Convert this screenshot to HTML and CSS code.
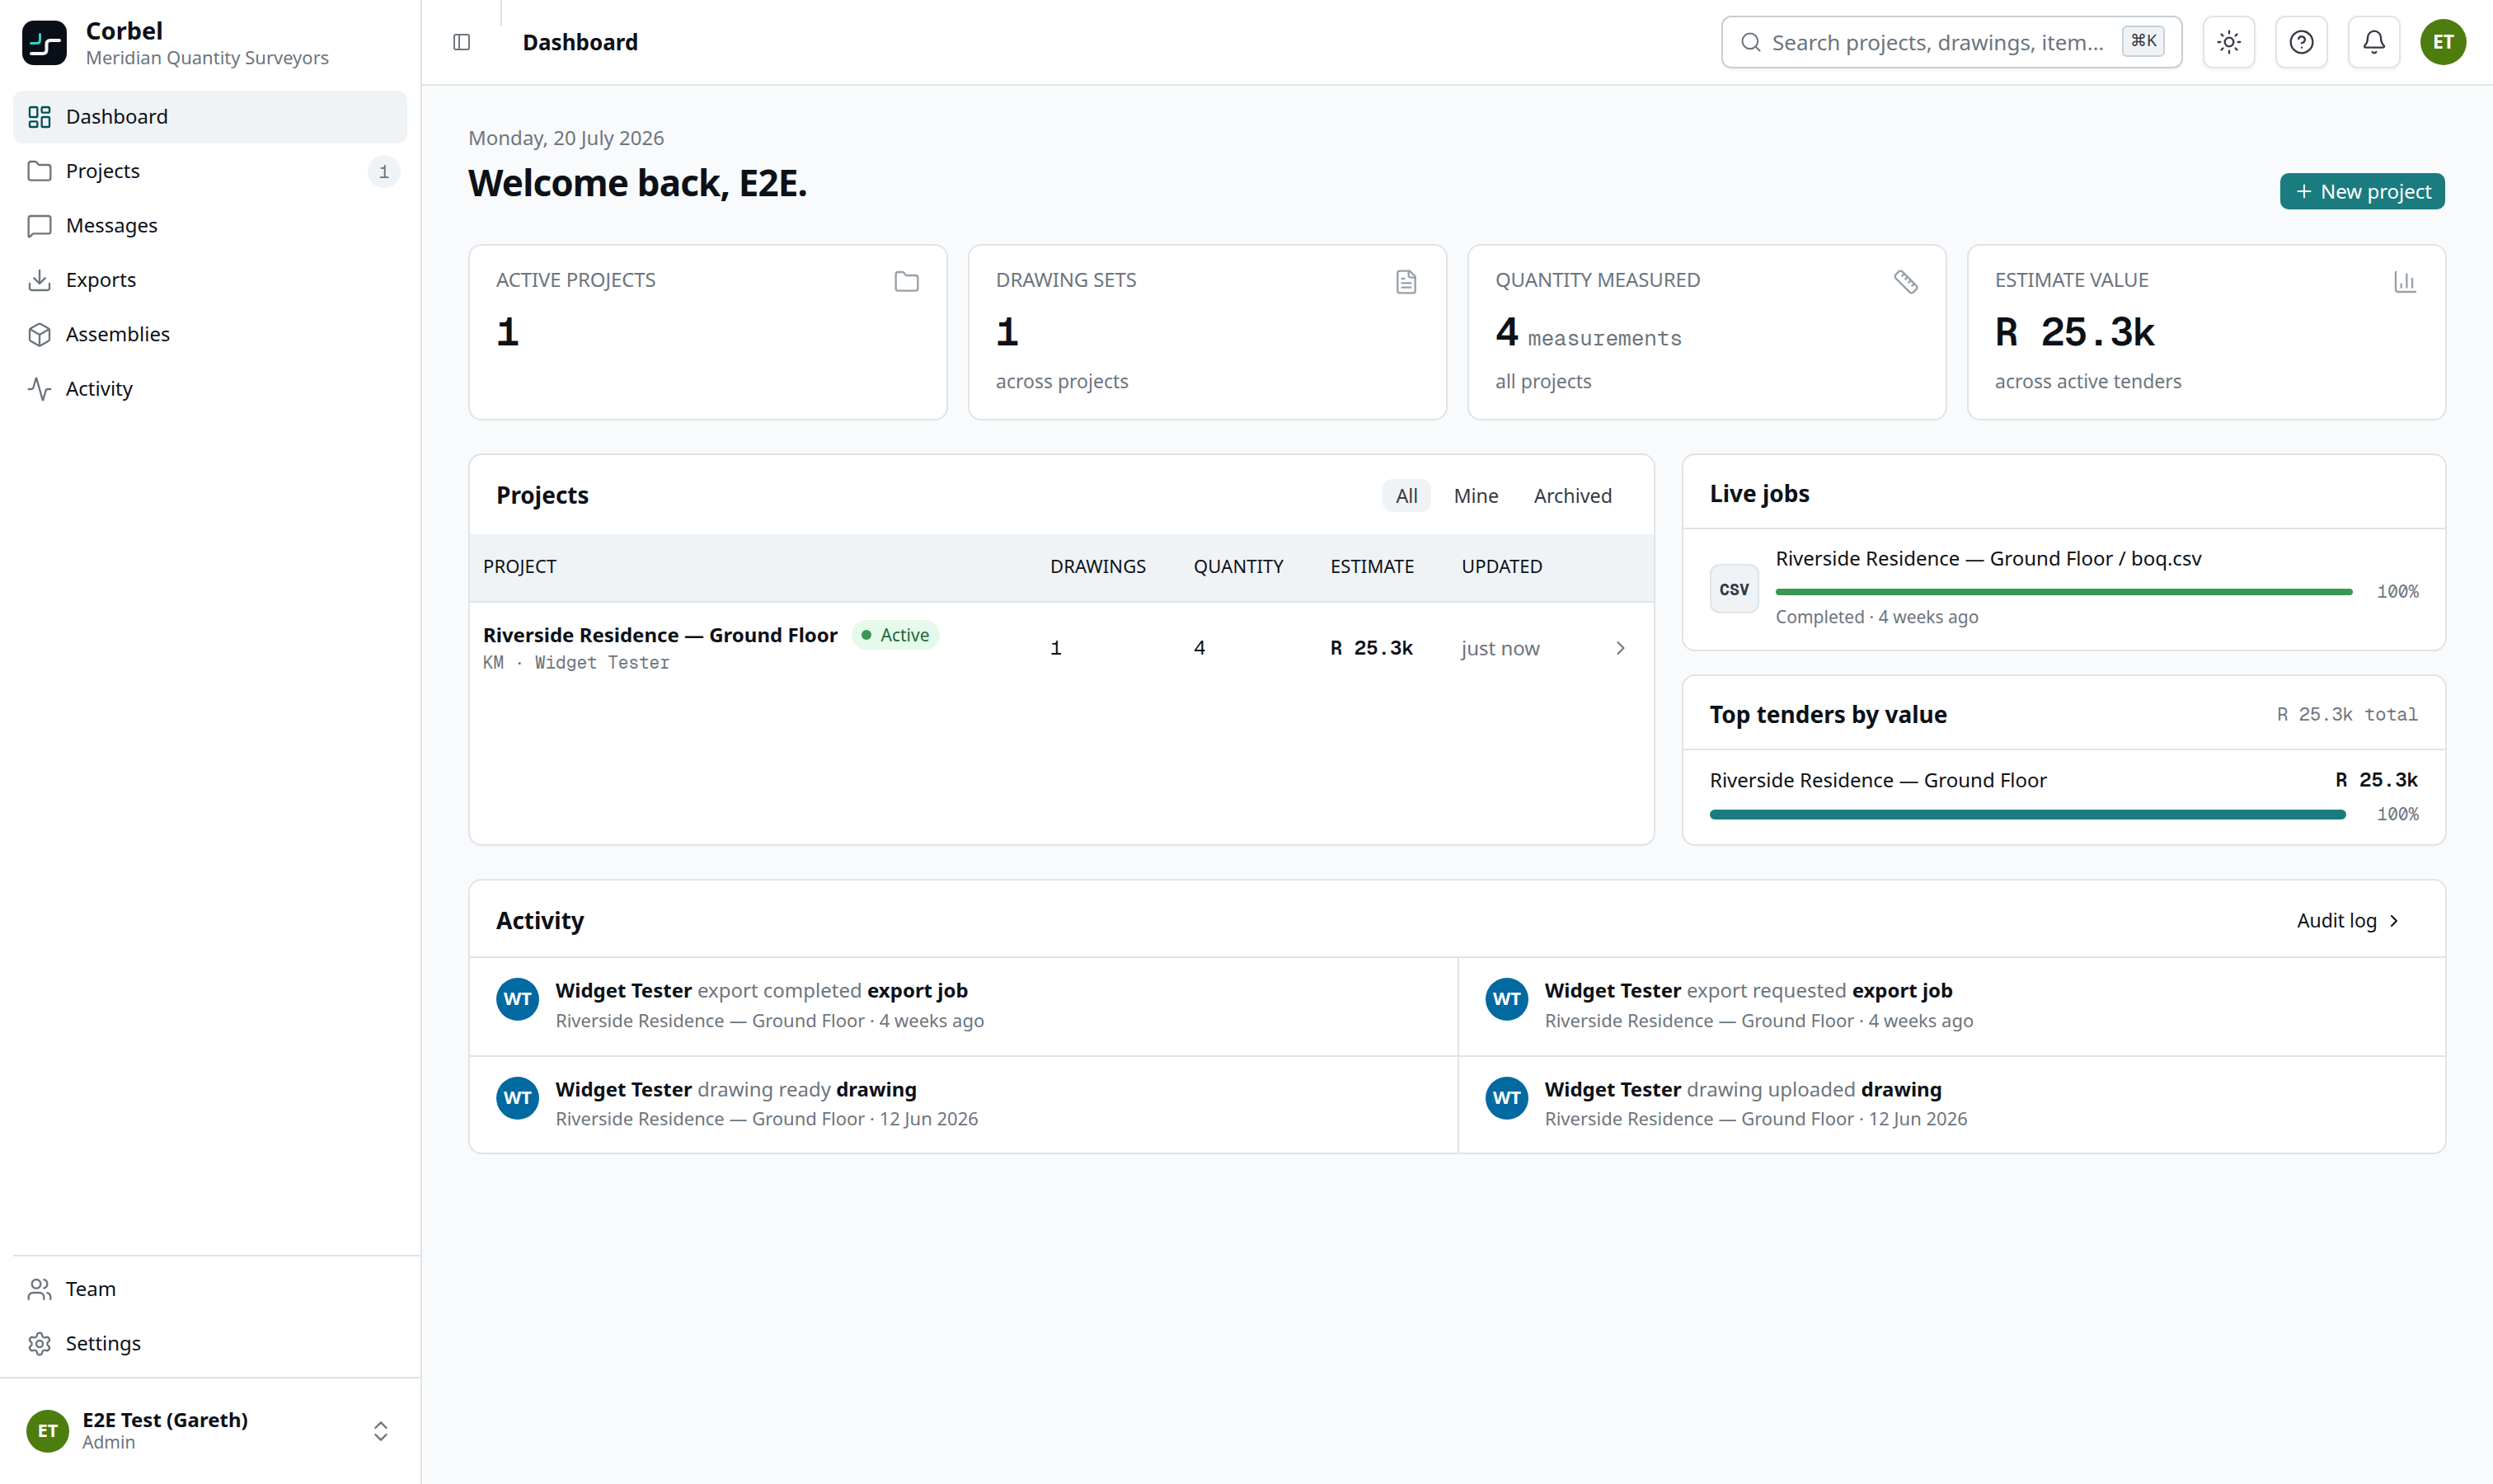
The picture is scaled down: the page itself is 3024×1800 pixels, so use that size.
FILE: index.html
```
<!DOCTYPE html>
<html lang="en">
<head>
    <meta charset="UTF-8">
    <meta name="viewport" content="width=device-width, initial-scale=1.0">
    <title>Dashboard - Corbel</title>
    <link rel="stylesheet" href="styles.css">
</head>
<body>
    <aside class="sidebar">
        <div class="brand">
            <svg class="brand-logo" viewBox="0 0 54 54">
                <rect width="54" height="54" rx="14" fill="#0a0f17"/>
                <path d="M10.500 27.500H17.500Q21.500 27.500 21.500 23.500V16.500" fill="none" stroke="#2dd4bf" stroke-width="3" stroke-linecap="round"/>
                <path d="M11 40H25Q29.500 40 29.500 35.500V28.500Q29.500 24 34 24H45" fill="none" stroke="#f4f6fb" stroke-width="4" stroke-linecap="round"/>
            </svg>
            <div>
                <div class="brand-name">Corbel</div>
                <div class="brand-org">Meridian Quantity Surveyors</div>
            </div>
        </div>

        <nav class="nav">
            <a class="nav-item active">
                <svg class="icon" viewBox="0 0 24 24"><rect width="7" height="9" x="3" y="3" rx="1"/><rect width="7" height="5" x="14" y="3" rx="1"/><rect width="7" height="9" x="14" y="12" rx="1"/><rect width="7" height="5" x="3" y="16" rx="1"/></svg>
                Dashboard
            </a>
            <a class="nav-item">
                <svg class="icon" viewBox="0 0 24 24"><path d="M20 20a2 2 0 0 0 2-2V8a2 2 0 0 0-2-2h-7.900a2 2 0 0 1-1.690-.9L9.600 3.900A2 2 0 0 0 7.930 3H4a2 2 0 0 0-2 2v13a2 2 0 0 0 2 2Z"/></svg>
                Projects
                <span class="nav-count">1</span>
            </a>
            <a class="nav-item">
                <svg class="icon" viewBox="0 0 24 24"><path d="M22 17a2 2 0 0 1-2 2H6.828a2 2 0 0 0-1.414.586l-2.202 2.202A.71.71 0 0 1 2 21.286V5a2 2 0 0 1 2-2h16a2 2 0 0 1 2 2z"/></svg>
                Messages
            </a>
            <a class="nav-item">
                <svg class="icon" viewBox="0 0 24 24"><path d="M12 15V3"/><path d="M21 15v4a2 2 0 0 1-2 2H5a2 2 0 0 1-2-2v-4"/><path d="m7 10 5 5 5-5"/></svg>
                Exports
            </a>
            <a class="nav-item">
                <svg class="icon" viewBox="0 0 24 24"><path d="M21 8a2 2 0 0 0-1-1.730l-7-4a2 2 0 0 0-2 0l-7 4A2 2 0 0 0 3 8v8a2 2 0 0 0 1 1.730l7 4a2 2 0 0 0 2 0l7-4A2 2 0 0 0 21 16Z"/><path d="m3.300 7 8.700 5 8.700-5"/><path d="M12 22V12"/></svg>
                Assemblies
            </a>
            <a class="nav-item">
                <svg class="icon" viewBox="0 0 24 24"><path d="M22 12h-2.480a2 2 0 0 0-1.930 1.460l-2.350 8.360a.25.25 0 0 1-.48 0L9.240 2.180a.25.25 0 0 0-.48 0l-2.350 8.360A2 2 0 0 1 4.490 12H2"/></svg>
                Activity
            </a>
        </nav>

        <nav class="nav nav-bottom">
            <a class="nav-item">
                <svg class="icon" viewBox="0 0 24 24"><path d="M16 21v-2a4 4 0 0 0-4-4H6a4 4 0 0 0-4 4v2"/><path d="M16 3.128a4 4 0 0 1 0 7.744"/><path d="M22 21v-2a4 4 0 0 0-3-3.870"/><circle cx="9" cy="7" r="4"/></svg>
                Team
            </a>
            <a class="nav-item">
                <svg class="icon" viewBox="0 0 24 24"><path d="M9.671 4.136a2.340 2.340 0 0 1 4.659 0 2.340 2.340 0 0 0 3.319 1.915 2.340 2.340 0 0 1 2.330 4.033 2.340 2.340 0 0 0 0 3.831 2.340 2.340 0 0 1-2.330 4.033 2.340 2.340 0 0 0-3.319 1.915 2.340 2.340 0 0 1-4.659 0 2.340 2.340 0 0 0-3.320-1.915 2.340 2.340 0 0 1-2.330-4.033 2.340 2.340 0 0 0 0-3.831A2.340 2.340 0 0 1 6.350 6.051a2.340 2.340 0 0 0 3.319-1.915"/><circle cx="12" cy="12" r="3"/></svg>
                Settings
            </a>
        </nav>

        <div class="user">
            <span class="avatar green">ET</span>
            <div class="user-text">
                <div class="user-name">E2E Test (Gareth)</div>
                <div class="user-role">Admin</div>
            </div>
            <svg class="icon" viewBox="0 0 24 24"><path d="m7 15 5 5 5-5"/><path d="m7 9 5-5 5 5"/></svg>
        </div>
    </aside>

    <div class="page">
        <header class="topbar">
            <svg class="icon icon-panel" viewBox="0 0 24 24"><rect width="18" height="18" x="3" y="3" rx="2"/><path d="M9 3v18"/></svg>
            <span class="topbar-sep"></span>
            <h1>Dashboard</h1>
            <div class="search">
                <svg class="icon" viewBox="0 0 24 24"><path d="m21 21-4.340-4.340"/><circle cx="11" cy="11" r="8"/></svg>
                <span class="search-text">Search projects, drawings, item…</span>
                <kbd>⌘K</kbd>
            </div>
            <button class="icon-btn"><svg class="icon" viewBox="0 0 24 24"><circle cx="12" cy="12" r="4"/><path d="M12 2v2"/><path d="M12 20v2"/><path d="m4.930 4.930 1.410 1.410"/><path d="m17.660 17.660 1.410 1.410"/><path d="M2 12h2"/><path d="M20 12h2"/><path d="m6.340 17.660-1.410 1.410"/><path d="m19.070 4.930-1.410 1.410"/></svg></button>
            <button class="icon-btn"><svg class="icon" viewBox="0 0 24 24"><circle cx="12" cy="12" r="10"/><path d="M9.090 9a3 3 0 0 1 5.830 1c0 2-3 3-3 3"/><path d="M12 17h.01"/></svg></button>
            <button class="icon-btn"><svg class="icon" viewBox="0 0 24 24"><path d="M10.268 21a2 2 0 0 0 3.464 0"/><path d="M3.262 15.326A1 1 0 0 0 4 17h16a1 1 0 0 0 .74-1.673C19.410 13.956 18 12.499 18 8A6 6 0 0 0 6 8c0 4.499-1.411 5.956-2.738 7.326"/></svg></button>
            <span class="avatar avatar-lg green">ET</span>
        </header>

        <main>
            <div class="welcome">
                <div>
                    <div class="date">Monday, 20 July 2026</div>
                    <h2>Welcome back, E2E.</h2>
                </div>
                <button class="new-btn">
                    <svg class="icon" viewBox="0 0 24 24"><path d="M5 12h14"/><path d="M12 5v14"/></svg>
                    New project
                </button>
            </div>

            <section class="stats">
                <div class="card stat">
                    <div class="stat-top">
                        <span>ACTIVE PROJECTS</span>
                        <svg class="icon" viewBox="0 0 24 24"><path d="M20 20a2 2 0 0 0 2-2V8a2 2 0 0 0-2-2h-7.900a2 2 0 0 1-1.690-.9L9.600 3.900A2 2 0 0 0 7.930 3H4a2 2 0 0 0-2 2v13a2 2 0 0 0 2 2Z"/></svg>
                    </div>
                    <div class="stat-value">1</div>
                </div>
                <div class="card stat">
                    <div class="stat-top">
                        <span>DRAWING SETS</span>
                        <svg class="icon" viewBox="0 0 24 24"><path d="M15 2H6a2 2 0 0 0-2 2v16a2 2 0 0 0 2 2h12a2 2 0 0 0 2-2V7Z"/><path d="M14 2v4a2 2 0 0 0 2 2h4"/><path d="M10 9H8"/><path d="M16 13H8"/><path d="M16 17H8"/></svg>
                    </div>
                    <div class="stat-value">1</div>
                    <div class="stat-note">across projects</div>
                </div>
                <div class="card stat">
                    <div class="stat-top">
                        <span>QUANTITY MEASURED</span>
                        <svg class="icon" viewBox="0 0 24 24"><path d="M21.300 15.300a2.400 2.400 0 0 1 0 3.400l-2.600 2.600a2.400 2.400 0 0 1-3.400 0L2.700 8.700a2.410 2.410 0 0 1 0-3.400l2.600-2.600a2.410 2.410 0 0 1 3.400 0Z"/><path d="m14.500 12.500 2-2"/><path d="m11.500 9.500 2-2"/><path d="m8.500 6.500 2-2"/><path d="m17.500 15.500 2-2"/></svg>
                    </div>
                    <div class="stat-value">4<span class="stat-unit">measurements</span></div>
                    <div class="stat-note">all projects</div>
                </div>
                <div class="card stat">
                    <div class="stat-top">
                        <span>ESTIMATE VALUE</span>
                        <svg class="icon" viewBox="0 0 24 24"><path d="M3 3v16a2 2 0 0 0 2 2h16"/><path d="M18 17V9"/><path d="M13 17V5"/><path d="M8 17v-3"/></svg>
                    </div>
                    <div class="stat-value">R 25.3k</div>
                    <div class="stat-note">across active tenders</div>
                </div>
            </section>

            <section class="columns">
                <div class="card projects">
                    <div class="projects-head">
                        <h3>Projects</h3>
                        <div class="tabs">
                            <button class="tab selected">All</button>
                            <button class="tab">Mine</button>
                            <button class="tab">Archived</button>
                        </div>
                    </div>
                    <table>
                        <thead>
                            <tr>
                                <th class="col-project">PROJECT</th>
                                <th class="col-drawings">DRAWINGS</th>
                                <th class="col-quantity">QUANTITY</th>
                                <th class="col-estimate">ESTIMATE</th>
                                <th class="col-updated">UPDATED</th>
                                <th></th>
                            </tr>
                        </thead>
                        <tbody>
                            <tr>
                                <td>
                                    <div class="project-name">Riverside Residence — Ground Floor <span class="status">Active</span></div>
                                    <div class="project-sub">KM · Widget Tester</div>
                                </td>
                                <td class="mono">1</td>
                                <td class="mono">4</td>
                                <td class="mono strong">R 25.3k</td>
                                <td class="muted">just now</td>
                                <td class="go"><svg class="icon icon-sm" viewBox="0 0 24 24"><path d="m9 18 6-6-6-6"/></svg></td>
                            </tr>
                        </tbody>
                    </table>
                </div>

                <div class="side">
                    <div class="card">
                        <div class="card-head"><h3>Live jobs</h3></div>
                        <div class="job">
                            <span class="file-type">CSV</span>
                            <div class="job-body">
                                <div class="job-name">Riverside Residence — Ground Floor / boq.csv</div>
                                <div class="progress">
                                    <div class="bar bar-green"></div>
                                    <span class="percent">100%</span>
                                </div>
                                <div class="job-note">Completed · 4 weeks ago</div>
                            </div>
                        </div>
                    </div>
                    <div class="card">
                        <div class="card-head">
                            <h3>Top tenders by value</h3>
                            <span class="total">R 25.3k total</span>
                        </div>
                        <div class="tender">
                            <div class="tender-row">
                                <span>Riverside Residence — Ground Floor</span>
                                <span class="mono strong">R 25.3k</span>
                            </div>
                            <div class="progress">
                                <div class="bar bar-teal"></div>
                                <span class="percent">100%</span>
                            </div>
                        </div>
                    </div>
                </div>
            </section>

            <section class="card activity">
                <div class="activity-head">
                    <h3>Activity</h3>
                    <a class="audit">Audit log <svg class="icon" viewBox="0 0 24 24"><path d="m9 18 6-6-6-6"/></svg></a>
                </div>
                <div class="feed">
                    <div class="event">
                        <span class="avatar blue">WT</span>
                        <div>
                            <div class="event-title"><b>Widget Tester</b> export completed <b>export job</b></div>
                            <div class="event-note">Riverside Residence — Ground Floor · 4 weeks ago</div>
                        </div>
                    </div>
                    <div class="event">
                        <span class="avatar blue">WT</span>
                        <div>
                            <div class="event-title"><b>Widget Tester</b> export requested <b>export job</b></div>
                            <div class="event-note">Riverside Residence — Ground Floor · 4 weeks ago</div>
                        </div>
                    </div>
                    <div class="event">
                        <span class="avatar blue">WT</span>
                        <div>
                            <div class="event-title"><b>Widget Tester</b> drawing ready <b>drawing</b></div>
                            <div class="event-note">Riverside Residence — Ground Floor · 12 Jun 2026</div>
                        </div>
                    </div>
                    <div class="event">
                        <span class="avatar blue">WT</span>
                        <div>
                            <div class="event-title"><b>Widget Tester</b> drawing uploaded <b>drawing</b></div>
                            <div class="event-note">Riverside Residence — Ground Floor · 12 Jun 2026</div>
                        </div>
                    </div>
                </div>
            </section>
        </main>
    </div>
</body>
</html>
```
FILE: styles.css
```
:root {
    --text: #0d1117;
    --muted: #6c757d;
    --border: #dfe4e8;
    --soft: #eff3f6;
    --teal: #1b7c80;
    --mono: "Geist Mono", "Liberation Mono", monospace;
}

* {
    box-sizing: border-box;
}

body {
    margin: 0;
    display: flex;
    height: 1800px;
    font-family: "Noto Sans", sans-serif;
    font-size: 24px;
    line-height: 36px;
    color: var(--text);
    background-color: #f8fafc;
}

h1, h2, h3 {
    margin: 0;
    font-weight: 700;
}

h3 {
    font-size: 28px;
    line-height: 40px;
}

button {
    font-family: inherit;
    padding: 0;
}

.icon {
    width: 32px;
    height: 32px;
    flex: none;
    display: block;
    fill: none;
    stroke: currentColor;
    stroke-width: 1.75;
    stroke-linecap: round;
    stroke-linejoin: round;
}

.mono {
    font-family: var(--mono);
}

.strong {
    font-weight: 600;
}

.muted {
    color: var(--muted);
}

/* Sidebar */
.sidebar {
    width: 512px;
    flex: none;
    display: flex;
    flex-direction: column;
    background-color: white;
    border-right: 2px solid var(--border);
}

.brand {
    height: 110px;
    padding: 19px 0 0 27px;
    display: flex;
    gap: 23px;
}

.brand-logo {
    width: 54px;
    height: 54px;
    margin-top: 6px;
}

.brand-name {
    font-size: 29px;
    font-weight: 700;
    line-height: 36px;
}

.brand-org {
    font-size: 22px;
    line-height: 29px;
    color: var(--muted);
}

.nav {
    padding: 0 16px;
    display: flex;
    flex-direction: column;
    gap: 2px;
}

.nav-item {
    height: 64px;
    padding: 0 8px 2px 16px;
    display: flex;
    align-items: center;
    gap: 16px;
    border-radius: 12px;
}

.nav-item .icon {
    margin-top: 2px;
    color: var(--muted);
}

.nav-item.active {
    background-color: var(--soft);
}

.nav-item.active .icon {
    color: #044e54;
}

.nav-count {
    width: 40px;
    height: 40px;
    margin: 2px 0 0 auto;
    border-radius: 20px;
    background-color: var(--soft);
    color: var(--muted);
    font-family: var(--mono);
    font-size: 22px;
    line-height: 40px;
    text-align: center;
}

.nav-bottom {
    margin: auto 0 0 16px;
    padding: 8px 16px 8px 0;
    border-top: 2px solid var(--border);
}

.user {
    height: 130px;
    padding: 0 32px;
    display: flex;
    align-items: center;
    gap: 16px;
    border-top: 2px solid var(--border);
    color: var(--muted);
}

.user-text {
    flex: 1;
    padding-bottom: 5px;
}

.user-name {
    font-weight: 700;
    line-height: 30px;
    color: var(--text);
}

.user-role {
    font-size: 21px;
    line-height: 24px;
}

.avatar {
    width: 52px;
    height: 52px;
    flex: none;
    border-radius: 50%;
    color: white;
    font-size: 22px;
    font-weight: 700;
    line-height: 48px;
    text-align: center;
}

.avatar-lg {
    width: 56px;
    height: 56px;
    font-size: 23px;
    line-height: 54px;
}

.green {
    background-color: #4d7c0f;
}

.blue {
    background-color: #0369a1;
}

/* Top bar */
.page {
    flex: 1;
}

.topbar {
    height: 104px;
    padding: 0 32px 0 36px;
    display: flex;
    align-items: center;
    background-color: white;
    border-bottom: 2px solid var(--border);
}

.icon-panel {
    width: 24px;
    height: 24px;
    color: var(--muted);
    stroke-width: 2;
}

.topbar-sep {
    width: 2px;
    height: 32px;
    margin: 0 25px 0 35px;
    align-self: flex-start;
    background-color: var(--border);
}

.topbar h1 {
    font-size: 26px;
}

.search {
    width: 560px;
    height: 64px;
    margin-left: auto;
    padding: 0 20px;
    display: flex;
    align-items: center;
    border: 2px solid #c8cfd6;
    border-radius: 12px;
    box-shadow: 0 2px 4px rgba(0, 0, 0, 0.05);
    color: var(--muted);
    font-size: 26px;
}

.search .icon {
    width: 28px;
    height: 28px;
    margin-right: 12px;
}

.search-text {
    flex: 1;
}

kbd {
    width: 52px;
    height: 38px;
    margin-bottom: 2px;
    border: 2px solid #c8cfd6;
    border-radius: 6px;
    background-color: var(--soft);
    color: #343a40;
    font-family: "Noto Sans", sans-serif;
    font-size: 20px;
    line-height: 32px;
    text-align: center;
}

.icon-btn {
    width: 64px;
    height: 64px;
    margin-left: 24px;
    display: flex;
    align-items: center;
    justify-content: center;
    border: 2px solid var(--border);
    border-radius: 12px;
    background-color: white;
    box-shadow: 0 2px 4px rgba(0, 0, 0, 0.05);
    color: #343a40;
}

.topbar .avatar {
    margin-left: 24px;
}

/* Content */
main {
    padding: 45px 56px;
}

.welcome {
    height: 147px;
    display: flex;
    justify-content: space-between;
}

.date {
    color: var(--muted);
}

.welcome h2 {
    margin-top: 8px;
    font-size: 44px;
    line-height: 56px;
    letter-spacing: -0.02em;
}

.new-btn {
    width: 200px;
    height: 44px;
    margin: 61px 2px 0 0;
    padding-bottom: 2px;
    display: flex;
    align-items: center;
    justify-content: center;
    gap: 7px;
    border: none;
    border-radius: 10px;
    background-color: var(--teal);
    color: white;
    font-size: 24px;
}

.new-btn .icon {
    width: 26px;
    height: 26px;
    margin-top: 2px;
}

.card {
    border: 2px solid var(--border);
    border-radius: 16px;
    background-color: white;
    overflow: hidden;
}

.stats {
    display: grid;
    grid-template-columns: repeat(4, 1fr);
    gap: 24px;
}

.stat {
    height: 214px;
    padding: 23px 32px;
}

.stat-top {
    display: flex;
    justify-content: space-between;
    letter-spacing: -0.12px;
    color: var(--muted);
}

.stat-top .icon {
    margin-top: 5px;
    color: #98a0a7;
}

.stat-value {
    margin-top: 14px;
    font-family: var(--mono);
    font-size: 48px;
    font-weight: 600;
    line-height: 60px;
    letter-spacing: -0.02em;
}

.stat-unit {
    margin-left: 12px;
    font-size: 26px;
    font-weight: 400;
    line-height: 1;
    letter-spacing: 0;
    color: var(--muted);
}

.stat-note {
    margin-top: 12px;
    font-size: 23px;
    color: var(--muted);
}

.columns {
    margin-top: 40px;
    display: grid;
    grid-template-columns: 1440px 1fr;
    gap: 32px;
}

.projects {
    height: 476px;
}

.projects-head {
    height: 96px;
    padding: 0 34px 0 32px;
    display: flex;
    align-items: center;
    justify-content: space-between;
}

.tabs {
    margin-top: 2px;
    display: flex;
    gap: 11px;
}

.tab {
    height: 40px;
    padding: 0 16px;
    border: none;
    border-radius: 12px;
    background: none;
    color: #343a40;
    font-size: 23.300px;
    line-height: 36px;
}

.tab.selected {
    background-color: var(--soft);
}

table {
    width: 100%;
    border-collapse: collapse;
    table-layout: fixed;
}

th {
    height: 82px;
    padding: 0 16px 6px;
    background-color: var(--soft);
    border-bottom: 2px solid var(--border);
    font-size: 22px;
    font-weight: 400;
    letter-spacing: 0.1px;
    text-align: left;
}

td {
    height: 114px;
    padding: 0 16px 4px;
}

.col-project {
    width: 688px;
}

.col-drawings {
    width: 174px;
}

.col-quantity {
    width: 166px;
}

.col-estimate {
    width: 159px;
}

.col-updated {
    width: 150px;
}

.project-name {
    display: flex;
    align-items: center;
    gap: 16px;
    font-weight: 700;
}

.status {
    height: 36px;
    padding: 0 12px;
    display: inline-flex;
    align-items: center;
    gap: 12px;
    border-radius: 18px;
    background-color: #e5faea;
    color: #1b6b35;
    font-size: 21px;
    font-weight: 400;
}

.status::before {
    content: "";
    width: 12px;
    height: 12px;
    border-radius: 50%;
    background-color: #3b9754;
}

.project-sub {
    margin-top: 1px;
    font-family: var(--mono);
    font-size: 21px;
    line-height: 30px;
    color: var(--muted);
}

.icon-sm {
    width: 28px;
    height: 28px;
}

.go {
    color: var(--muted);
}

.go .icon {
    margin-left: auto;
    margin-right: 10px;
}

.side {
    display: flex;
    flex-direction: column;
    justify-content: space-between;
}

.card-head {
    height: 90px;
    padding: 3px 32px 0;
    display: flex;
    align-items: center;
    justify-content: space-between;
    border-bottom: 2px solid var(--border);
}

.total {
    font-family: var(--mono);
    font-size: 22px;
    color: var(--muted);
}

.job {
    height: 146px;
    padding: 0 32px 2px;
    display: flex;
    align-items: center;
    gap: 20px;
}

.file-type {
    width: 60px;
    height: 60px;
    border: 2px solid var(--border);
    border-radius: 12px;
    background-color: var(--soft);
    color: #343a40;
    font-family: var(--mono);
    font-size: 20px;
    font-weight: 700;
    line-height: 58px;
    text-align: center;
}

.job-body {
    flex: 1;
    padding-bottom: 6px;
}

.job-body .progress {
    margin-top: 5px;
}

.progress {
    display: flex;
    align-items: center;
    justify-content: space-between;
}

.bar {
    flex: 1;
    margin-right: 30px;
}

.bar-green {
    height: 8px;
    border-radius: 4px;
    background-color: #3b9754;
}

.bar-teal {
    height: 12px;
    margin-right: 38px;
    border-radius: 6px;
    background-color: var(--teal);
}

.percent {
    font-family: var(--mono);
    font-size: 21px;
    color: var(--muted);
}

.job-note {
    margin-top: -3px;
    font-size: 21px;
    line-height: 30px;
    color: var(--muted);
}

.tender {
    height: 114px;
    padding: 18px 32px 0;
}

.tender-row {
    margin-bottom: 6px;
    display: flex;
    justify-content: space-between;
}

/* Activity feed */
.activity {
    margin-top: 40px;
}

.activity-head {
    height: 92px;
    padding: 4px 50px 0 32px;
    display: flex;
    align-items: center;
    justify-content: space-between;
}

.audit {
    display: flex;
    align-items: center;
    gap: 8px;
    font-size: 23px;
}

.audit .icon {
    width: 24px;
    height: 24px;
    margin-top: 2px;
    stroke-width: 2;
}

.feed {
    display: grid;
    grid-template-columns: 1200px 1fr;
}

.event {
    height: 120px;
    padding: 24px 32px 0;
    display: flex;
    gap: 20px;
    border-top: 2px solid var(--border);
}

.event:nth-child(odd) {
    border-right: 2px solid var(--border);
}

.event:nth-child(n+3) {
    height: 118px;
}

.event-title {
    margin-top: -3px;
    color: var(--muted);
}

.event-title b {
    color: var(--text);
}

.event-note {
    font-size: 22px;
    line-height: 36px;
    color: var(--muted);
}

.event:nth-child(n+3) .event-note {
    line-height: 34px;
}
```
